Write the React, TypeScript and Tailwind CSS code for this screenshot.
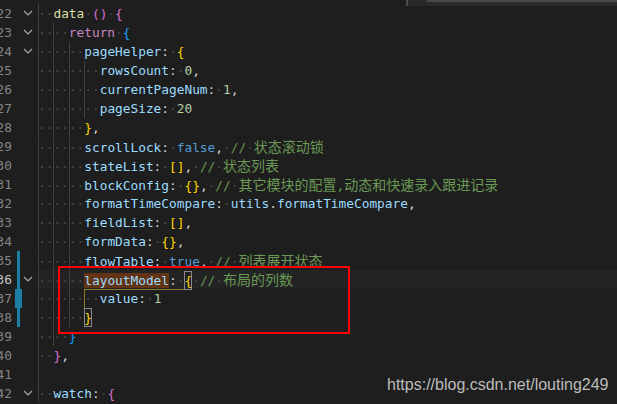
import React from "react";

type Tok = { t: string; c: string; find?: boolean; box?: boolean };
type Line = { n: number; indent: number; toks: Tok[]; fold?: boolean; blank?: boolean };

const key = "text-[#9cdcfe]";
const fn = "text-[#dcdcaa]";
const kw = "text-[#c586c0]";
const bool = "text-[#569cd6]";
const num = "text-[#b5cea8]";
const p = "text-[#d4d4d4]";
const gold = "text-[#ffd700]";
const pink = "text-[#da70d6]";
const blue = "text-[#179fff]";
const cm = "text-[#6a9955]";

const k = (t: string, c: string): Tok => ({ t, c });

const lines: Line[] = [
  { n: 22, indent: 1, fold: true, toks: [k("data", fn), k(" ", p), k("()", pink), k(" ", p), k("{", pink)] },
  { n: 23, indent: 2, fold: true, toks: [k("return", kw), k(" ", p), k("{", blue)] },
  { n: 24, indent: 3, fold: true, toks: [k("pageHelper", key), k(": ", p), k("{", gold)] },
  { n: 25, indent: 4, toks: [k("rowsCount", key), k(": ", p), k("0", num), k(",", p)] },
  { n: 26, indent: 4, toks: [k("currentPageNum", key), k(": ", p), k("1", num), k(",", p)] },
  { n: 27, indent: 4, toks: [k("pageSize", key), k(": ", p), k("20", num)] },
  { n: 28, indent: 3, toks: [k("}", gold), k(",", p)] },
  { n: 29, indent: 3, toks: [k("scrollLock", key), k(": ", p), k("false", bool), k(", ", p), k("// 状态滚动锁", cm)] },
  { n: 30, indent: 3, toks: [k("stateList", key), k(": ", p), k("[]", gold), k(", ", p), k("// 状态列表", cm)] },
  { n: 31, indent: 3, toks: [k("blockConfig", key), k(": ", p), k("{}", gold), k(", ", p), k("// 其它模块的配置,动态和快速录入跟进记录", cm)] },
  { n: 32, indent: 3, toks: [k("formatTimeCompare", key), k(": ", p), k("utils", key), k(".", p), k("formatTimeCompare", key), k(",", p)] },
  { n: 33, indent: 3, toks: [k("fieldList", key), k(": ", p), k("[]", gold), k(",", p)] },
  { n: 34, indent: 3, toks: [k("formData", key), k(": ", p), k("{}", gold), k(",", p)] },
  { n: 35, indent: 3, toks: [k("flowTable", key), k(": ", p), k("true", bool), k(", ", p), k("// 列表展开状态", cm)] },
  { n: 36, indent: 3, fold: true, toks: [] },
  { n: 37, indent: 4, toks: [k("value", key), k(": ", p), k("1", num)] },
  { n: 38, indent: 3, toks: [{ t: "}", c: gold, box: true }] },
  { n: 39, indent: 2, toks: [k("}", blue)] },
  { n: 40, indent: 1, toks: [k("}", pink), k(",", p)] },
  { n: 41, indent: 1, blank: true, toks: [] },
  { n: 42, indent: 1, fold: true, toks: [k("watch", key), k(": ", p), k("{", pink)] },
];

const Text = ({ t, c }: { t: string; c: string }) => {
  const parts = t.split(/( |[\u4e00-\u9fff]+)/).filter(Boolean);
  return (
    <>
      {parts.map((s, i) =>
        s === " " ? (
          <span key={i} className="text-[#4a4a4a]">
            ·
          </span>
        ) : /[\u4e00-\u9fff]/.test(s) ? (
          <span key={i} className={`${c} text-[14px] font-['Noto_Sans_CJK_SC',sans-serif]`}>
            {s}
          </span>
        ) : (
          <span key={i} className={c}>
            {s}
          </span>
        )
      )}
    </>
  );
};

const Tokens = ({ toks }: { toks: Tok[] }) => (
  <>
    {toks.map((tk, i) =>
      tk.box ? (
        <span key={i} className={`inline-block h-[19px] shadow-[inset_0_0_0_1px_#888888] ${tk.c}`}>
          {tk.t}
        </span>
      ) : tk.find ? (
        <span key={i} className={`bg-[#623314] ${tk.c}`}>
          {tk.t}
        </span>
      ) : (
        <Text key={i} t={tk.t} c={tk.c} />
      )
    )}
  </>
);

const Chevron = () => (
  <svg width="10" height="6" viewBox="0 0 10 6" fill="none">
    <polyline points="1,1 5,5 9,1" stroke="#a8a8a8" strokeWidth="1.2" />
  </svg>
);

const Row = ({ line }: { line: Line }) => {
  const { n, indent, toks, fold, blank } = line;
  const bar =
    n === 37 ? (
      <div className="w-[7px] h-full bg-[#1b7fa6]" />
    ) : n >= 35 && n <= 38 ? (
      <div className="w-[3px] h-full bg-[#1b7fa6]" />
    ) : null;

  return (
    <div className="flex h-[19px] leading-[19px]">
      <div className="w-[38px] shrink-0 flex items-center">
        <div className={`w-[12px] flex justify-end ${n === 36 ? "text-[#c6c6c6]" : "text-[#858585]"}`}>
          {n}
        </div>
        <div className="w-[3px]" />
        <div className="w-[7px] h-full flex justify-center">{bar}</div>
        <div className="w-[1px]" />
        {fold && <Chevron />}
      </div>
      <div className={`flex-1 whitespace-pre ${n === 36 ? "bg-[#232323]" : ""}`}>
        {Array.from({ length: indent }).map((_, i) => (
          <span
            key={i}
            className={`inline-block h-[19px] ${blank ? "text-transparent" : "text-[#4a4a4a]"} ${
              n === 37 && i === 3 ? "shadow-[inset_1px_0_0_#8c7c2a]" : "shadow-[inset_1px_0_0_#404040]"
            }`}
          >
            ··
          </span>
        ))}
        {n === 36 ? (
          <>
            <span className="inline-block h-[19px] shadow-[inset_0_-1px_0_#8c7c2a]">
              <span className="bg-[#623314] text-[#9cdcfe]">layoutModel</span>
              <Text t=": " c={p} />
              <span className="inline-block h-[19px] shadow-[inset_0_0_0_1px_#888888] text-[#ffd700]">{"{"}</span>
            </span>
            <Text t=" // 布局的列数" c={cm} />
          </>
        ) : (
          <Tokens toks={toks} />
        )}
      </div>
    </div>
  );
};

export default function App() {
  return (
    <div className="relative w-[617px] h-[404px] overflow-hidden bg-[#1e1e1e] pt-[3.5px] font-['DejaVu_Sans_Mono',monospace] text-[12.8px]">
      {lines.map((l) => (
        <Row key={l.n} line={l} />
      ))}

      {/* find widget edge */}
      <div className="absolute top-0 right-0 w-[211px] h-[6px] bg-[#2a2a2a] border-l-2 border-[#4a4a4a]">
        <div className="ml-[19px] h-[2px] bg-[#474747]" />
      </div>

      {/* annotation */}
      <div className="absolute left-[58px] top-[266px] w-[292px] h-[68px] border-2 border-[#ff0000]" />

      <div className="absolute left-[387px] top-[377px] text-[16px] leading-[16px] font-['Liberation_Sans',Arial,sans-serif] text-[#bcbcbc]">
        https://blog.csdn.net/louting249
      </div>
    </div>
  );
}
